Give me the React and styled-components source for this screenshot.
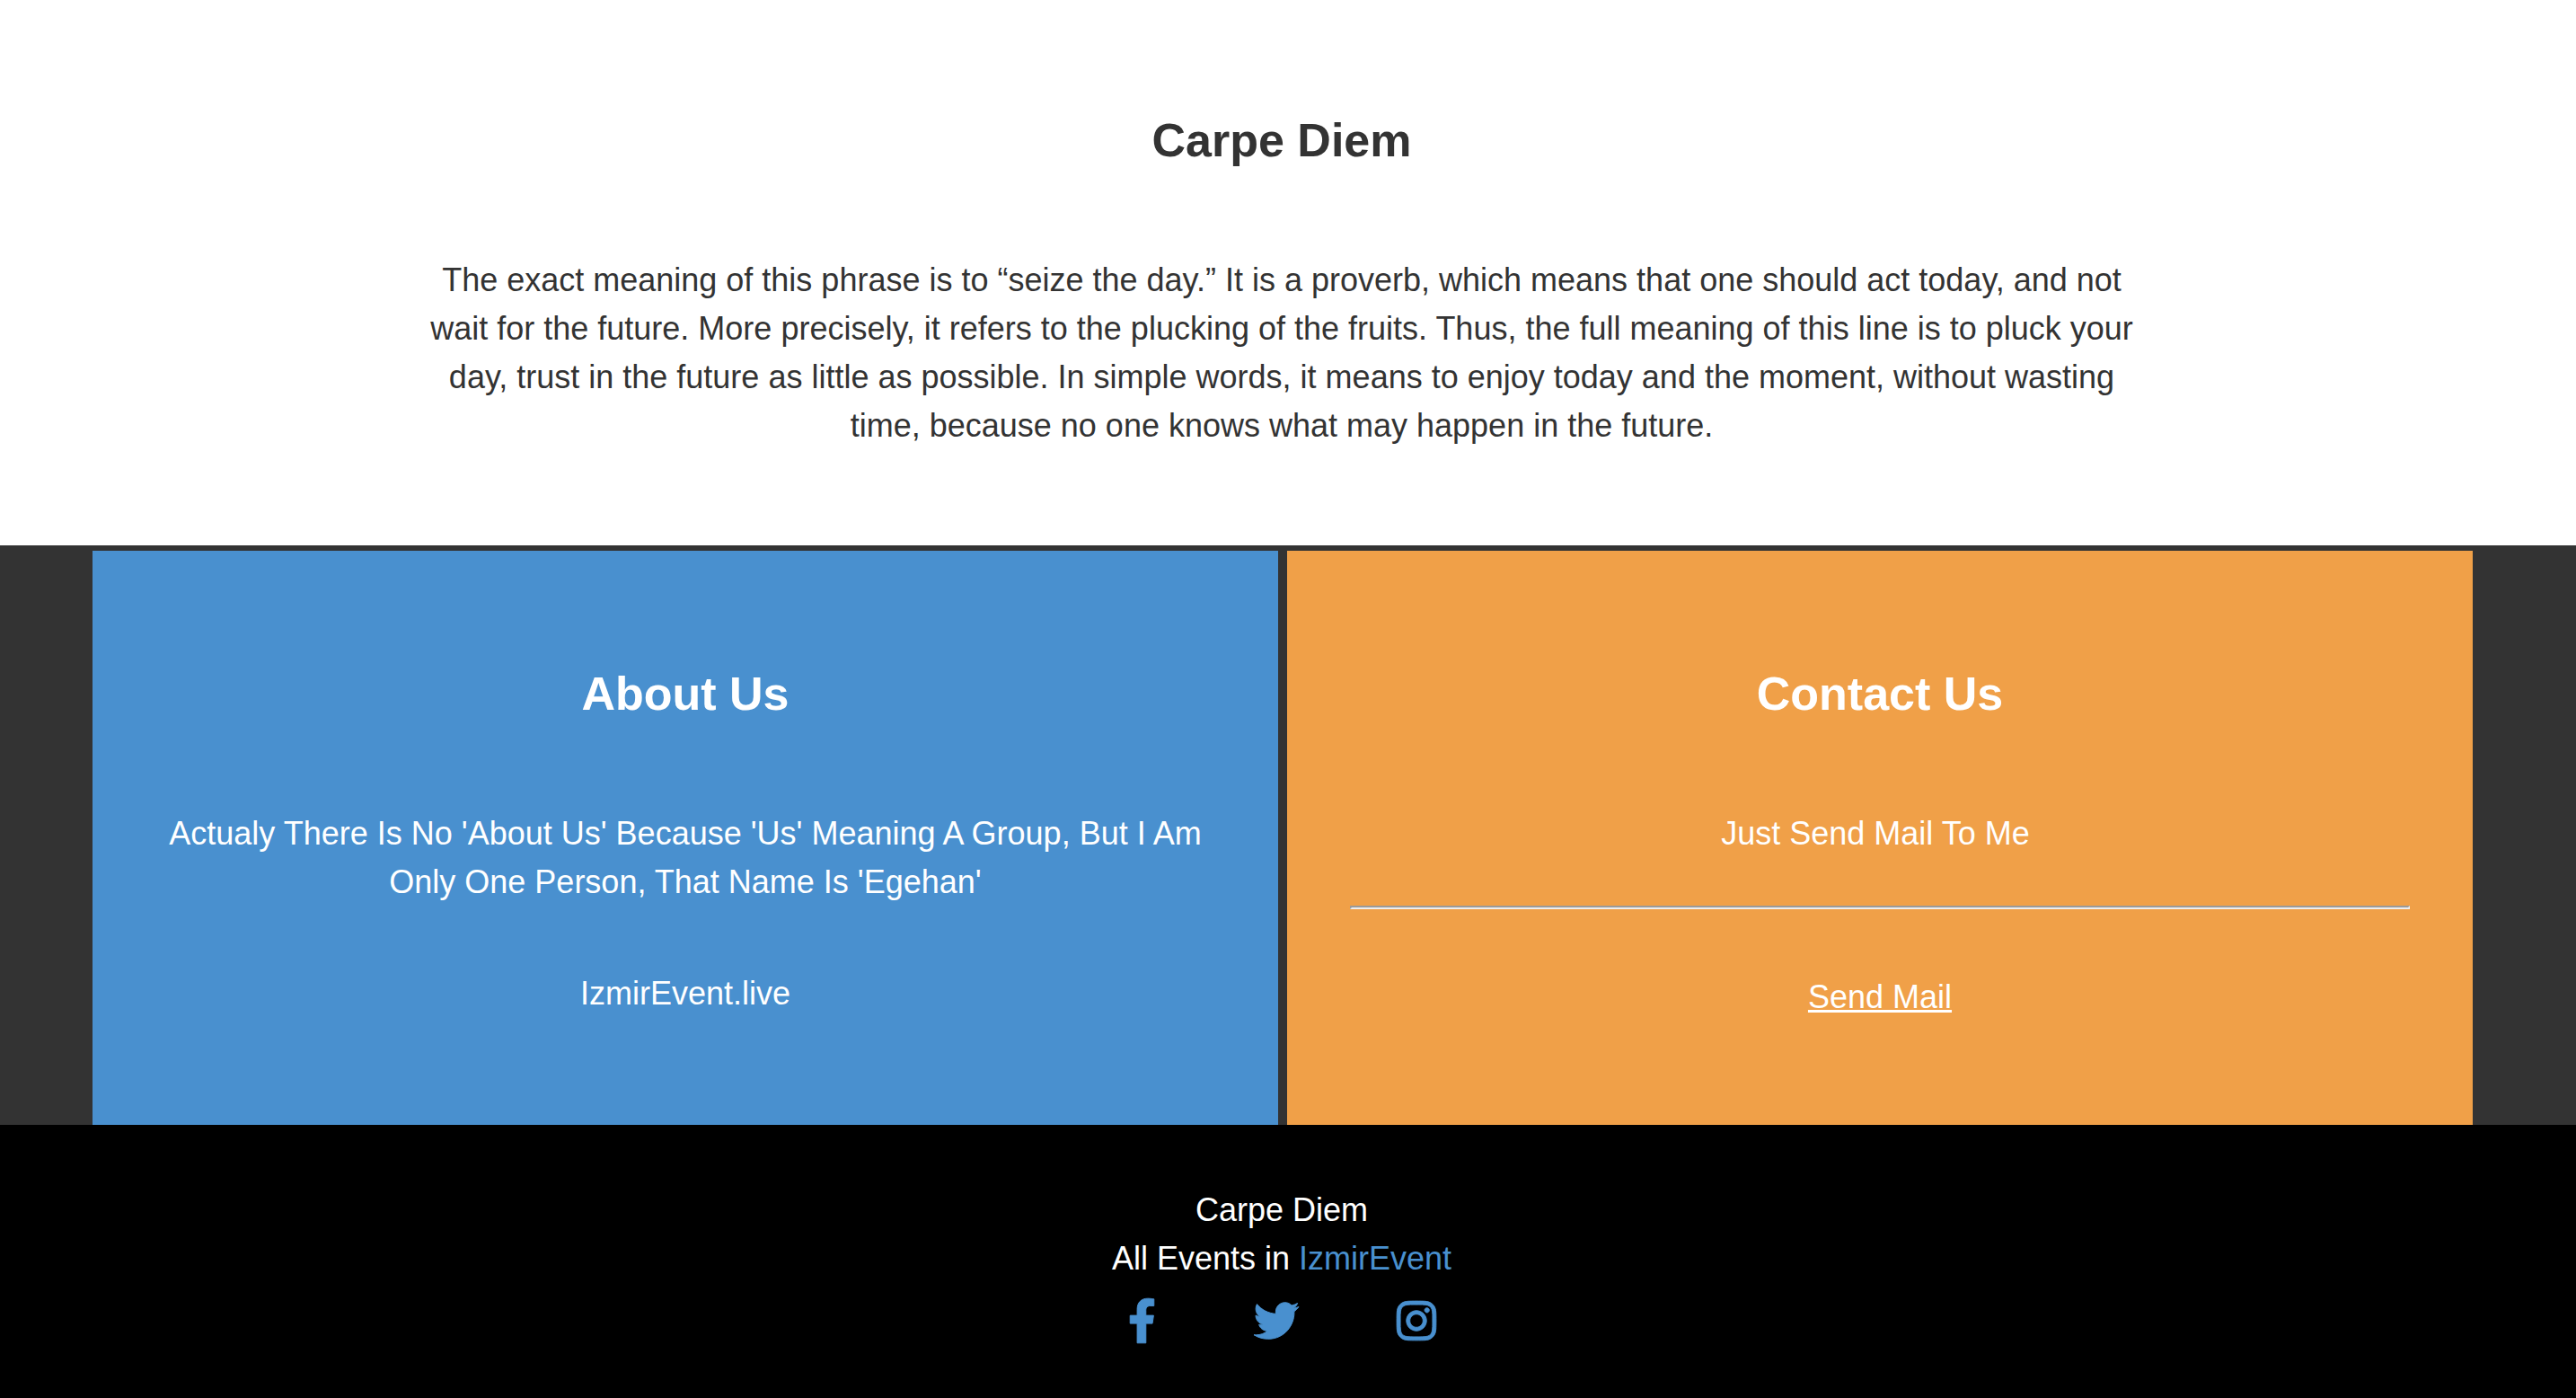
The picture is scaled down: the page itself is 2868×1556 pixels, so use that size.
import React from "react";
import styled, { createGlobalStyle } from "styled-components";
import { FaFacebookF, FaTwitter, FaInstagram } from "react-icons/fa";

const GlobalStyle = createGlobalStyle`
  *, *::before, *::after { box-sizing: border-box; }
  body {
    margin: 0;
    background: #000;
    color: #333;
    font-family: Arial, "Liberation Sans", sans-serif;
    font-size: 36px;
    line-height: 54px;
    text-align: center;
  }
`;

const Section = styled.section`
  display: flex;
  flex-direction: column;
  align-items: center;
  padding: 117px 98px 106px 84px;
  background: #fff;
`;

const Heading = styled.h2`
  margin: 0 0 90px;
  font-size: 52px;
  line-height: 78px;
  font-weight: 700;
`;

const Text = styled.p`
  margin: 0;
  max-width: ${(p) => (p.$wide ? "1908px" : "none")};
`;

const Panels = styled.div`
  display: grid;
  grid-template-columns: 1fr 1fr;
  gap: 10px;
  padding: 6px 115px 0 103px;
  background: #333;
`;

const Panel = styled.section`
  padding: 120px 70px 115px;
  background: ${(p) => p.$color};
  color: #fff;
`;

const PanelNote = styled(Text)`
  margin-top: 70px;
`;

const Rule = styled.hr`
  margin: 53px 0 71px;
  border: 2px inset #eee;
`;

const Link = styled.a`
  color: ${(p) => p.$color};
  text-decoration: ${(p) => (p.$underlined ? "underline" : "none")};
`;

const Footer = styled.footer`
  padding: 68px 98px 54px 84px;
  background: #000;
  color: #fff;
`;

const Social = styled.nav`
  display: flex;
  justify-content: center;
  gap: 109px;
  padding-top: 17px;
`;

const IconLink = styled.a`
  display: flex;
  color: #4990cf;
  font-size: 50px;

  svg {
    width: ${(p) => p.$width}px;
    stroke-width: 10;
    overflow: visible;
  }
`;

export default function App() {
  return (
    <>
      <GlobalStyle />
      <main>
        <Section>
          <Heading>Carpe Diem</Heading>
          <Text $wide>
            The exact meaning of this phrase is to “seize the day.” It is a
            proverb, which means that one should act today, and not wait for the
            future. More precisely, it refers to the plucking of the fruits.
            Thus, the full meaning of this line is to pluck your day, trust in
            the future as little as possible. In simple words, it means to enjoy
            today and the moment, without wasting time, because no one knows
            what may happen in the future.
          </Text>
        </Section>
        <Panels>
          <Panel $color="#4990cf">
            <Heading>About Us</Heading>
            <Text>
              Actualy There Is No 'About Us' Because 'Us' Meaning A Group, But I
              Am Only One Person, That Name Is 'Egehan'
            </Text>
            <PanelNote>IzmirEvent.live</PanelNote>
          </Panel>
          <Panel $color="#f0a048">
            <Heading>Contact Us</Heading>
            <Text>Just Send Mail To Me&nbsp;</Text>
            <Rule />
            <Text>
              <Link href="#mail" $color="#fff" $underlined>Send Mail</Link>
            </Text>
          </Panel>
        </Panels>
      </main>
      <Footer>
        <Text>Carpe Diem</Text>
        <Text>
          All Events in <Link href="#events" $color="#4990cf">IzmirEvent</Link>
        </Text>
        <Social>
          <IconLink href="#facebook" aria-label="Facebook" $width={31}><FaFacebookF /></IconLink>
          <IconLink href="#twitter" aria-label="Twitter" $width={50}><FaTwitter /></IconLink>
          <IconLink href="#instagram" aria-label="Instagram" $width={44}><FaInstagram /></IconLink>
        </Social>
      </Footer>
    </>
  );
}
